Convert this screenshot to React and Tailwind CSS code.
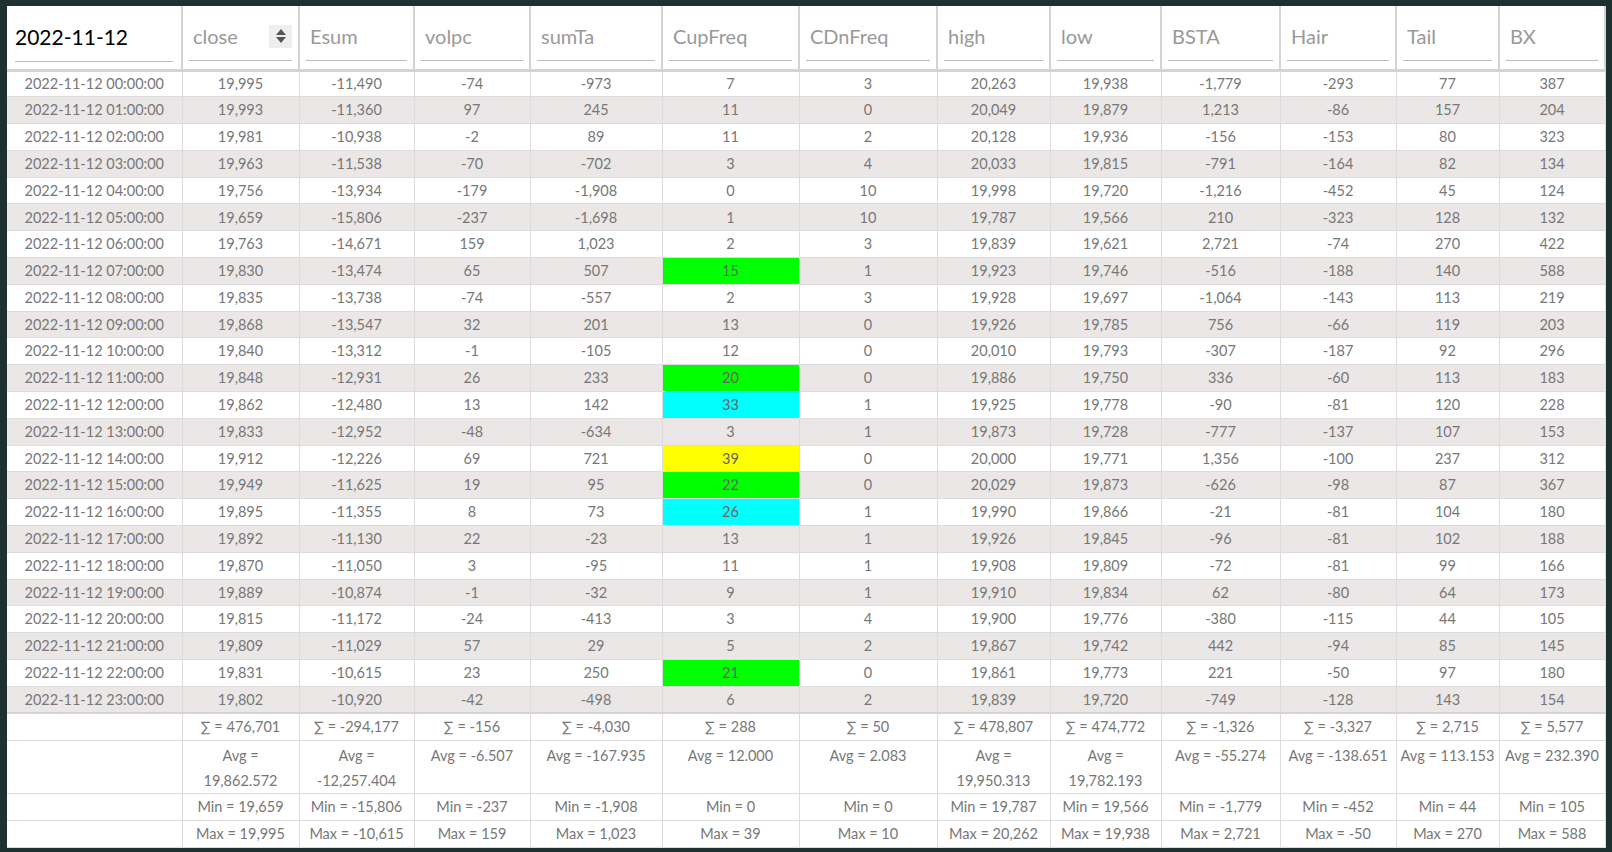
const cols = [
  ["close", 117], ["Esum", 115], ["volpc", 116], ["sumTa", 132], ["CupFreq", 137], ["CDnFreq", 138],
  ["high", 113], ["low", 111], ["BSTA", 119], ["Hair", 116], ["Tail", 103], ["BX", 106],
];

const raw = `19,995|-11,490|-74|-973|7|3|20,263|19,938|-1,779|-293|77|387
19,993|-11,360|97|245|11|0|20,049|19,879|1,213|-86|157|204
19,981|-10,938|-2|89|11|2|20,128|19,936|-156|-153|80|323
19,963|-11,538|-70|-702|3|4|20,033|19,815|-791|-164|82|134
19,756|-13,934|-179|-1,908|0|10|19,998|19,720|-1,216|-452|45|124
19,659|-15,806|-237|-1,698|1|10|19,787|19,566|210|-323|128|132
19,763|-14,671|159|1,023|2|3|19,839|19,621|2,721|-74|270|422
19,830|-13,474|65|507|15|1|19,923|19,746|-516|-188|140|588
19,835|-13,738|-74|-557|2|3|19,928|19,697|-1,064|-143|113|219
19,868|-13,547|32|201|13|0|19,926|19,785|756|-66|119|203
19,840|-13,312|-1|-105|12|0|20,010|19,793|-307|-187|92|296
19,848|-12,931|26|233|20|0|19,886|19,750|336|-60|113|183
19,862|-12,480|13|142|33|1|19,925|19,778|-90|-81|120|228
19,833|-12,952|-48|-634|3|1|19,873|19,728|-777|-137|107|153
19,912|-12,226|69|721|39|0|20,000|19,771|1,356|-100|237|312
19,949|-11,625|19|95|22|0|20,029|19,873|-626|-98|87|367
19,895|-11,355|8|73|26|1|19,990|19,866|-21|-81|104|180
19,892|-11,130|22|-23|13|1|19,926|19,845|-96|-81|102|188
19,870|-11,050|3|-95|11|1|19,908|19,809|-72|-81|99|166
19,889|-10,874|-1|-32|9|1|19,910|19,834|62|-80|64|173
19,815|-11,172|-24|-413|3|4|19,900|19,776|-380|-115|44|105
19,809|-11,029|57|29|5|2|19,867|19,742|442|-94|85|145
19,831|-10,615|23|250|21|0|19,861|19,773|221|-50|97|180
19,802|-10,920|-42|-498|6|2|19,839|19,720|-749|-128|143|154`;

const rows = raw.split("\n").map((l) => l.split("|"));

const cupColor = { 7: "bg-[#00ff00]", 11: "bg-[#00ff00]", 12: "bg-[#00ffff]", 14: "bg-[#ffff00]", 15: "bg-[#00ff00]", 16: "bg-[#00ffff]", 22: "bg-[#00ff00]" };

const sums = ["476,701", "-294,177", "-156", "-4,030", "288", "50", "478,807", "474,772", "-1,326", "-3,327", "2,715", "5,577"];
const avgs = [["19,862.572"], ["-12,257.404"], "-6.507", "-167.935", "12.000", "2.083", ["19,950.313"], ["19,782.193"], "-55.274", "-138.651", "113.153", "232.390"];
const mins = ["19,659", "-15,806", "-237", "-1,908", "0", "0", "19,787", "19,566", "-1,779", "-452", "44", "105"];
const maxs = ["19,995", "-10,615", "159", "1,023", "39", "10", "20,262", "19,938", "2,721", "-50", "270", "588"];

const cell = "border-r border-b border-[#dcdcdc] text-center px-1";

export default function App() {
  return (
    <div className="w-[1612px] h-[852px] bg-[#1d3131] pt-[6px] pl-[7px]" style={{ fontFamily: "Lato, 'Noto Sans', sans-serif" }}>
      <div className="w-[1598px] bg-white">
        <table className="border-collapse text-[14.5px] text-[#777] table-fixed w-[1598px]">
          <colgroup>
            <col style={{ width: 175 }} />
            {cols.map(([n, w]) => <col key={n} style={{ width: w }} />)}
          </colgroup>
          <thead>
            <tr className="h-[64px] border-b-[3px] border-[#d4d4d4]">
              <th className="border-r-2 border-[#d4d4d4] px-2 font-normal text-left">
                <div className="border-b border-[#bbb] pb-[9px] pt-[8px] text-[21px] text-black">2022-11-12</div>
              </th>
              {cols.map(([n], i) => (
                <th key={n} className="border-r-2 border-[#d4d4d4] px-[6px] font-normal text-left">
                  <div className="border-b border-[#bbb] pb-[9px] pt-[8px] pl-[4px] text-[20px] text-[#999] flex items-center justify-between">
                    <span>{n}</span>
                    {i === 0 && (
                      <span className="w-[23px] h-[23px] bg-[#eee] flex items-center justify-center">
                        <svg width="12" height="16" viewBox="0 0 12 16"><path d="M6 1l5 6H1z M6 15l5-6H1z" fill="#555" /></svg>
                      </span>
                    )}
                  </div>
                </th>
              ))}
            </tr>
          </thead>
          <tbody>
            {rows.map((r, i) => (
              <tr key={i} className={`h-[26.8px] ${i % 2 ? "bg-[#ebe7e6]" : "bg-white"}`}>
                <td className={cell}>2022-11-12 {String(i).padStart(2, "0")}:00:00</td>
                {r.map((v, j) => (
                  <td key={j} className={`${cell} ${j === 4 && cupColor[i] ? cupColor[i] + " text-[#666]" : ""}`}>{v}</td>
                ))}
              </tr>
            ))}
            <tr className="h-[27px] border-t-2 border-[#d4d4d4]">
              <td className={cell}></td>
              {sums.map((v, j) => <td key={j} className={cell}>∑ = {v}</td>)}
            </tr>
            <tr className="h-[52px]">
              <td className={cell}></td>
              {avgs.map((v, j) => (
                <td key={j} className={`${cell} align-top pt-[2px] leading-[25px]`}>
                  {Array.isArray(v) ? <>Avg =<br />{v[0]}</> : <>Avg = {v}</>}
                </td>
              ))}
            </tr>
            <tr className="h-[27px]">
              <td className={cell}></td>
              {mins.map((v, j) => <td key={j} className={cell}>Min = {v}</td>)}
            </tr>
            <tr className="h-[27px]">
              <td className={cell}></td>
              {maxs.map((v, j) => <td key={j} className={cell}>Max = {v}</td>)}
            </tr>
          </tbody>
        </table>
      </div>
    </div>
  );
}
